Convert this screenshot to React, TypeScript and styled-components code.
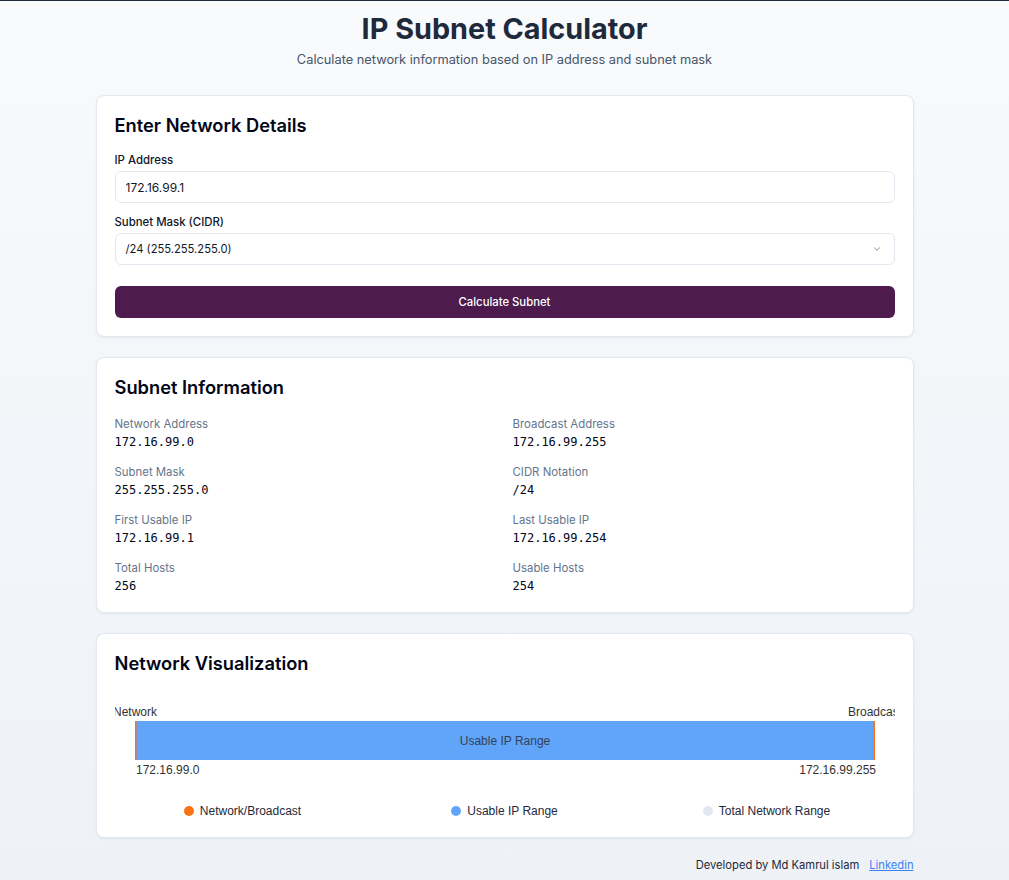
import styled, { createGlobalStyle } from 'styled-components'

const GlobalStyle = createGlobalStyle`
  html, body {
    margin: 0;
    padding: 0;
  }
  body {
    font-family: Inter, 'Noto Sans', sans-serif;
    color: #0f172a;
    background: linear-gradient(to bottom, #f8fafc, #eef2f7);
    min-height: 100vh;
  }
  * {
    box-sizing: border-box;
  }
`

const Page = styled.div`
  border-top: 1px solid #1e293b;
  min-height: 880px;
  padding: 10px 0 8px;
`

const Container = styled.div`
  width: 818px;
  margin: 0 auto;
  display: flex;
  flex-direction: column;
`

const Title = styled.h1`
  margin: 0;
  text-align: center;
  font-size: 28.8px;
  line-height: 36px;
  font-weight: 700;
  color: #1e293b;
`

const Subtitle = styled.p`
  margin: 3px 0 25px;
  text-align: center;
  font-size: 12.8px;
  line-height: 20px;
  color: #475569;
`

const Card = styled.section<{ $pb?: number }>`
  background: #fff;
  border: 1px solid #e2e8f0;
  border-radius: 8px;
  box-shadow: 0 1px 3px rgba(15, 23, 42, 0.06);
  padding: 17px 18px ${({ $pb = 18 }) => $pb}px;
  margin-bottom: 20px;
`

const CardTitle = styled.h2<{ $mb: number }>`
  margin: 0 0 ${({ $mb }) => $mb}px;
  font-size: 18.3px;
  line-height: 24px;
  font-weight: 600;
  color: #020617;
`

const Label = styled.label`
  display: block;
  font-size: 11.4px;
  line-height: 16px;
  font-weight: 500;
  color: #0f172a;
  margin-bottom: 3px;
`

const Field = styled.div`
  margin-bottom: 11px;
`

const Input = styled.input`
  display: block;
  width: 100%;
  height: 32px;
  border: 1px solid #e2e8f0;
  border-radius: 6px;
  padding: 0 10px;
  font-family: Inter, sans-serif;
  font-size: 12px;
  color: #0f172a;
  background: #fff;
  outline: none;
`

const SelectBox = styled.div`
  display: flex;
  align-items: center;
  justify-content: space-between;
  height: 32px;
  border: 1px solid #e2e8f0;
  border-radius: 6px;
  padding: 0 12px 0 10px;
  font-size: 11.2px;
  color: #0f172a;
  background: #fff;
`

const Button = styled.button`
  display: block;
  width: 100%;
  height: 32px;
  margin-top: 21px;
  border: none;
  border-radius: 6px;
  background: #4d1b4e;
  color: #fff;
  font-family: Inter, sans-serif;
  font-size: 11.3px;
  font-weight: 500;
`

const InfoGrid = styled.div`
  display: grid;
  grid-template-columns: 1fr 1fr;
  row-gap: 12px;
  column-gap: 16px;
`

const InfoItem = styled.div`
  display: flex;
  flex-direction: column;
`

const InfoLabel = styled.span`
  font-size: 11.4px;
  line-height: 16px;
  color: #64748b;
`

const InfoValue = styled.span`
  font-family: 'DejaVu Sans Mono', 'Liberation Mono', monospace;
  font-size: 12px;
  line-height: 20px;
  color: #020617;
`

const ChartWrap = styled.div`
  width: 100%;
  height: 86px;
  margin-top: 1px;
  overflow: hidden;

  svg {
    display: block;
    font-family: 'Liberation Sans', Arial, sans-serif;
    font-size: 12px;
  }
`

const Legend = styled.ul`
  list-style: none;
  margin: 22px 0 0;
  padding: 0;
  display: grid;
  grid-template-columns: repeat(3, 262px);
  justify-content: center;
`

const LegendItem = styled.li`
  display: flex;
  align-items: center;
  justify-content: center;
  gap: 6px;
  font-family: 'Liberation Sans', Arial, sans-serif;
  font-size: 12px;
  line-height: 16px;
  color: #1f2937;
`

const Dot = styled.span<{ $color: string }>`
  width: 10px;
  height: 10px;
  border-radius: 50%;
  background: ${({ $color }) => $color};
`

const Footer = styled.footer`
  display: flex;
  justify-content: flex-end;
  gap: 10px;
  margin-top: -1px;
  font-size: 11.2px;
  line-height: 16px;
  color: #1e293b;

  a {
    color: #3b82f6;
    text-decoration: underline;
  }
`

const info = [
  ['Network Address', '172.16.99.0'],
  ['Broadcast Address', '172.16.99.255'],
  ['Subnet Mask', '255.255.255.0'],
  ['CIDR Notation', '/24'],
  ['First Usable IP', '172.16.99.1'],
  ['Last Usable IP', '172.16.99.254'],
  ['Total Hosts', '256'],
  ['Usable Hosts', '254'],
]

const legend = [
  { color: '#f97316', text: 'Network/Broadcast' },
  { color: '#60a5fa', text: 'Usable IP Range' },
  { color: '#e2e8f0', text: 'Total Network Range' },
]

const Chevron = () => (
  <svg width="10" height="10" viewBox="0 0 24 24" fill="none" stroke="#94a3b8" strokeWidth="2.5" strokeLinecap="round" strokeLinejoin="round">
    <path d="m6 9 6 6 6-6" />
  </svg>
)

// the end labels are clipped by the chart box, as in the original chart
const NetworkChart = () => (
  <ChartWrap>
    <svg width="100%" height="86" viewBox="0 0 778 86">
      <text x="19" y="21" textAnchor="middle" fill="#333">Network</text>
      <text x="759" y="21" textAnchor="middle" fill="#333">Broadcast</text>
      <rect x="19" y="26" width="740" height="39" fill="#60a5fa" />
      <rect x="19" y="26" width="1.5" height="39" fill="#f97316" />
      <rect x="757.5" y="26" width="1.5" height="39" fill="#f97316" />
      <text x="389" y="50" textAnchor="middle" fill="#334155">Usable IP Range</text>
      <text x="20" y="79" textAnchor="start" fill="#333">172.16.99.0</text>
      <text x="760" y="79" textAnchor="end" fill="#333">172.16.99.255</text>
    </svg>
  </ChartWrap>
)

export default function App() {
  return (
    <>
      <GlobalStyle />
      <Page>
        <Container>
          <Title>IP Subnet Calculator</Title>
          <Subtitle>Calculate network information based on IP address and subnet mask</Subtitle>

          <Card>
            <CardTitle $mb={15}>Enter Network Details</CardTitle>
            <Field>
              <Label>IP Address</Label>
              <Input defaultValue="172.16.99.1" />
            </Field>
            <Field>
              <Label>Subnet Mask (CIDR)</Label>
              <SelectBox>
                <span>/24 (255.255.255.0)</span>
                <Chevron />
              </SelectBox>
            </Field>
            <Button>Calculate Subnet</Button>
          </Card>

          <Card $pb={16}>
            <CardTitle $mb={17}>Subnet Information</CardTitle>
            <InfoGrid>
              {info.map(([label, value]) => (
                <InfoItem key={label}>
                  <InfoLabel>{label}</InfoLabel>
                  <InfoValue>{value}</InfoValue>
                </InfoItem>
              ))}
            </InfoGrid>
          </Card>

          <Card>
            <CardTitle $mb={20}>Network Visualization</CardTitle>
            <NetworkChart />
            <Legend>
              {legend.map((l) => (
                <LegendItem key={l.text}>
                  <Dot $color={l.color} />
                  {l.text}
                </LegendItem>
              ))}
            </Legend>
          </Card>

          <Footer>
            <span>Developed by Md Kamrul islam</span>
            <a href="#">Linkedin</a>
          </Footer>
        </Container>
      </Page>
    </>
  )
}
